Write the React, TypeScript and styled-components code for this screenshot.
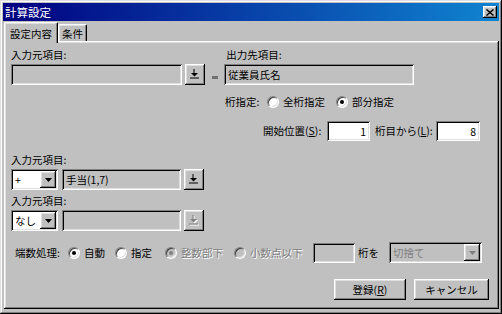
import styled, { createGlobalStyle, css } from 'styled-components';

const GlobalStyle = createGlobalStyle`
  html, body {
    margin: 0;
    padding: 0;
    background: #c0c0c0;
  }
  body {
    font-family: "Noto Sans CJK JP", "DejaVu Sans", sans-serif;
    font-size: 10.5px;
    color: #000;
  }
`;

const raised = css`
  background: #c0c0c0;
  box-shadow: inset -1px -1px #000, inset 1px 1px #fff, inset -2px -2px #808080, inset 2px 2px #dfdfdf;
`;

const sunken = css`
  box-shadow: inset 1px 1px #808080, inset -1px -1px #fff, inset 2px 2px #000, inset -2px -2px #dfdfdf;
`;

const Window = styled.div`
  width: 502px;
  height: 314px;
  box-sizing: border-box;
  padding: 3px;
  display: flex;
  flex-direction: column;
  background: #c0c0c0;
  box-shadow: inset -1px -1px #000, inset 1px 1px #dfdfdf, inset -2px -2px #808080, inset 2px 2px #fff;
`;

const TitleBar = styled.div`
  height: 18px;
  flex-shrink: 0;
  display: flex;
  align-items: center;
  justify-content: space-between;
  padding: 0 2px 0 2px;
  background: linear-gradient(to right, #000080, #1084d0);
  color: #fff;
  font-size: 11.5px;
`;

const CloseButton = styled.div`
  ${raised};
  width: 14px;
  height: 12px;
  display: flex;
  align-items: center;
  justify-content: center;
`;

const Tabs = styled.div`
  display: flex;
  align-items: flex-end;
  height: 19px;
  margin-top: 1px;
  padding-left: 1px;
  position: relative;
  z-index: 1;
`;

const Tab = styled.div<{ $active?: boolean }>`
  box-sizing: border-box;
  height: ${(p) => (p.$active ? 21 : 17)}px;
  margin-bottom: ${(p) => (p.$active ? -2 : 0)}px;
  padding: 0 ${(p) => (p.$active ? 5 : 3)}px;
  display: flex;
  align-items: center;
  background: #c0c0c0;
  border-top: 1px solid #fff;
  border-left: 1px solid #fff;
  border-right: 1px solid #000;
  box-shadow: inset -1px 0 #808080, inset 1px 1px #dfdfdf;
  border-radius: 2px 2px 0 0;
`;

const Panel = styled.div`
  flex: 1;
  margin: 0 0 2px 1px;
  padding: 7px 8px 0 7px;
  display: flex;
  flex-direction: column;
  box-shadow: inset -1px -1px #000, inset 1px 1px #fff, inset -2px -2px #808080, inset 2px 2px #dfdfdf;
`;

const Label = styled.div<{ $disabled?: boolean }>`
  height: 14px;
  line-height: 14px;
  white-space: nowrap;
  color: ${(p) => (p.$disabled ? '#808080' : '#000')};
  text-shadow: ${(p) => (p.$disabled ? '1px 1px #fff' : 'none')};
`;

const FixedLabel = styled(Label)<{ $w: number; $right?: boolean }>`
  width: ${(p) => p.$w}px;
  flex-shrink: 0;
  text-align: ${(p) => (p.$right ? 'right' : 'left')};
`;

const Row = styled.div<{ $top?: number; $left?: number }>`
  display: flex;
  align-items: center;
  margin-top: ${(p) => p.$top ?? 0}px;
  margin-left: ${(p) => p.$left ?? 0}px;
`;

const Column = styled.div<{ $w?: number; $top?: number }>`
  display: flex;
  flex-direction: column;
  gap: 2px;
  margin-top: ${(p) => p.$top ?? 0}px;
  width: ${(p) => (p.$w ? `${p.$w}px` : 'auto')};
`;

const Field = styled.div<{ $w: number; $white?: boolean; $right?: boolean; $h?: number; $gap?: number }>`
  ${sunken};
  box-sizing: border-box;
  width: ${(p) => p.$w}px;
  height: ${(p) => p.$h ?? 21}px;
  margin-left: ${(p) => p.$gap ?? 0}px;
  padding: 0 4px;
  display: flex;
  align-items: center;
  justify-content: ${(p) => (p.$right ? 'flex-end' : 'flex-start')};
  background: ${(p) => (p.$white ? '#fff' : '#c0c0c0')};
  flex-shrink: 0;
  white-space: nowrap;
`;

const PickButton = styled.div<{ $gap?: number }>`
  ${raised};
  width: 20px;
  height: 21px;
  margin-left: ${(p) => p.$gap ?? 3}px;
  display: flex;
  align-items: center;
  justify-content: center;
  flex-shrink: 0;
`;

const Equals = styled.div`
  margin: 5px 0 0 7px;
  width: 6px;
  height: 3px;
  background: #707070;
`;

const Combo = styled.div<{ $w: number; $disabled?: boolean }>`
  ${sunken};
  box-sizing: border-box;
  width: ${(p) => p.$w}px;
  height: 21px;
  padding: 2px;
  display: flex;
  align-items: stretch;
  background: ${(p) => (p.$disabled ? '#c0c0c0' : '#fff')};
  flex-shrink: 0;
`;

const ComboText = styled.div<{ $disabled?: boolean }>`
  flex: 1;
  display: flex;
  align-items: center;
  padding-left: 2px;
  white-space: nowrap;
  color: ${(p) => (p.$disabled ? '#808080' : '#000')};
`;

const ComboArrow = styled.div`
  ${raised};
  width: 16px;
  display: flex;
  align-items: center;
  justify-content: center;
`;

const RadioOption = styled.div<{ $w: number; $disabled?: boolean }>`
  width: ${(p) => p.$w}px;
  flex-shrink: 0;
  display: flex;
  align-items: center;
  gap: 4px;
  white-space: nowrap;
  color: ${(p) => (p.$disabled ? '#808080' : '#000')};
  text-shadow: ${(p) => (p.$disabled ? '1px 1px #fff' : 'none')};
`;

const RadioCircle = styled.span<{ $checked?: boolean; $disabled?: boolean }>`
  box-sizing: border-box;
  width: 12px;
  height: 12px;
  border-radius: 50%;
  border: 1px solid;
  border-color: #808080 #fff #fff #808080;
  box-shadow: inset 1px 1px #404040, inset -1px -1px #dfdfdf;
  background: ${(p) => (p.$disabled ? '#c0c0c0' : '#fff')};
  display: flex;
  align-items: center;
  justify-content: center;
  flex-shrink: 0;
  &::after {
    content: '';
    display: ${(p) => (p.$checked ? 'block' : 'none')};
    width: 4px;
    height: 4px;
    border-radius: 50%;
    background: ${(p) => (p.$disabled ? '#808080' : '#000')};
  }
`;

const Underline = styled.span`
  text-decoration: underline;
`;

const Footer = styled.div`
  display: flex;
  justify-content: flex-end;
  gap: 8px;
  margin-top: 16px;
  padding-right: 2px;
`;

const PushButton = styled.div<{ $w: number }>`
  ${raised};
  width: ${(p) => p.$w}px;
  height: 21px;
  display: flex;
  align-items: center;
  justify-content: center;
  white-space: nowrap;
`;

function PickIcon({ disabled }: { disabled?: boolean }) {
  const c = disabled ? '#808080' : '#000';
  const shape = (
    <>
      <rect x="3.5" y="0" width="1" height="4" />
      <polygon points="1,4 8,4 4.5,7.5" />
      <rect x="0" y="8.5" width="9" height="1" />
    </>
  );
  return (
    <svg width="10" height="11" viewBox="0 0 10 11">
      {disabled && (
        <g transform="translate(1,1)" fill="#fff">
          {shape}
        </g>
      )}
      <g fill={c}>{shape}</g>
    </svg>
  );
}

function DropIcon({ disabled }: { disabled?: boolean }) {
  return (
    <svg width="7" height="4" viewBox="0 0 7 4">
      <polygon points="0,0 7,0 3.5,4" fill={disabled ? '#808080' : '#000'} />
    </svg>
  );
}

function Radio({
  w,
  label,
  checked,
  disabled,
}: {
  w: number;
  label: string;
  checked?: boolean;
  disabled?: boolean;
}) {
  return (
    <RadioOption $w={w} $disabled={disabled}>
      <RadioCircle $checked={checked} $disabled={disabled} />
      <span>{label}</span>
    </RadioOption>
  );
}

function SourceRow({ op, value, disabled }: { op: string; value?: string; disabled?: boolean }) {
  return (
    <Row>
      <Combo $w={47}>
        <ComboText>{op}</ComboText>
        <ComboArrow>
          <DropIcon />
        </ComboArrow>
      </Combo>
      <Field $w={119} $gap={4}>
        {value}
      </Field>
      <PickButton>
        <PickIcon disabled={disabled} />
      </PickButton>
    </Row>
  );
}

export default function App() {
  return (
    <>
      <GlobalStyle />
      <Window>
        <TitleBar>
          <span>計算設定</span>
          <CloseButton>
            <svg width="8" height="7" viewBox="0 0 8 7">
              <path d="M0.5 0.5 L7.5 6.5 M7.5 0.5 L0.5 6.5" stroke="#000" strokeWidth="1.5" />
            </svg>
          </CloseButton>
        </TitleBar>

        <Tabs>
          <Tab $active>設定内容</Tab>
          <Tab>条件</Tab>
        </Tabs>

        <Panel>
          <Row style={{ alignItems: 'flex-start' }}>
            <Column $w={213}>
              <Label>入力元項目:</Label>
              <Row>
                <Field $w={171} />
                <PickButton>
                  <PickIcon />
                </PickButton>
                <Equals />
              </Row>
            </Column>
            <Column>
              <Label>&nbsp;出力先項目:</Label>
              <Field $w={190}>従業員氏名</Field>
            </Column>
          </Row>

          <Row $top={9} $left={214}>
            <FixedLabel $w={42}>桁指定:</FixedLabel>
            <Radio w={69} label="全桁指定" />
            <Radio w={60} label="部分指定" checked />
          </Row>

          <Row $top={12} $left={252}>
            <FixedLabel $w={64}>
              開始位置(<Underline>S</Underline>):
            </FixedLabel>
            <Field $w={43} $h={20} $white $right>
              1
            </Field>
            <FixedLabel $w={61} style={{ marginLeft: 5 }}>
              桁目から(<Underline>L</Underline>):
            </FixedLabel>
            <Field $w={44} $h={20} $white $right>
              8
            </Field>
          </Row>

          <Column $top={12}>
            <Label>入力元項目:</Label>
            <SourceRow op="+" value="手当(1,7)" />
          </Column>

          <Column $top={4}>
            <Label>入力元項目:</Label>
            <SourceRow op="なし" disabled />
          </Column>

          <Row $top={11} $left={4}>
            <FixedLabel $w={53}>端数処理:</FixedLabel>
            <Radio w={47} label="自動" checked />
            <Radio w={50} label="指定" />
            <Radio w={69} label="整数部下" checked disabled />
            <Radio w={79} label="小数点以下" disabled />
            <Field $w={42} $h={20} />
            <FixedLabel $w={31} style={{ marginLeft: 3 }}>
              桁を
            </FixedLabel>
            <Combo $w={93} $disabled>
              <ComboText $disabled>切捨て</ComboText>
              <ComboArrow>
                <DropIcon disabled />
              </ComboArrow>
            </Combo>
          </Row>

          <Footer>
            <PushButton $w={72}>
              登録(<Underline>R</Underline>)
            </PushButton>
            <PushButton $w={75}>キャンセル</PushButton>
          </Footer>
        </Panel>
      </Window>
    </>
  );
}
